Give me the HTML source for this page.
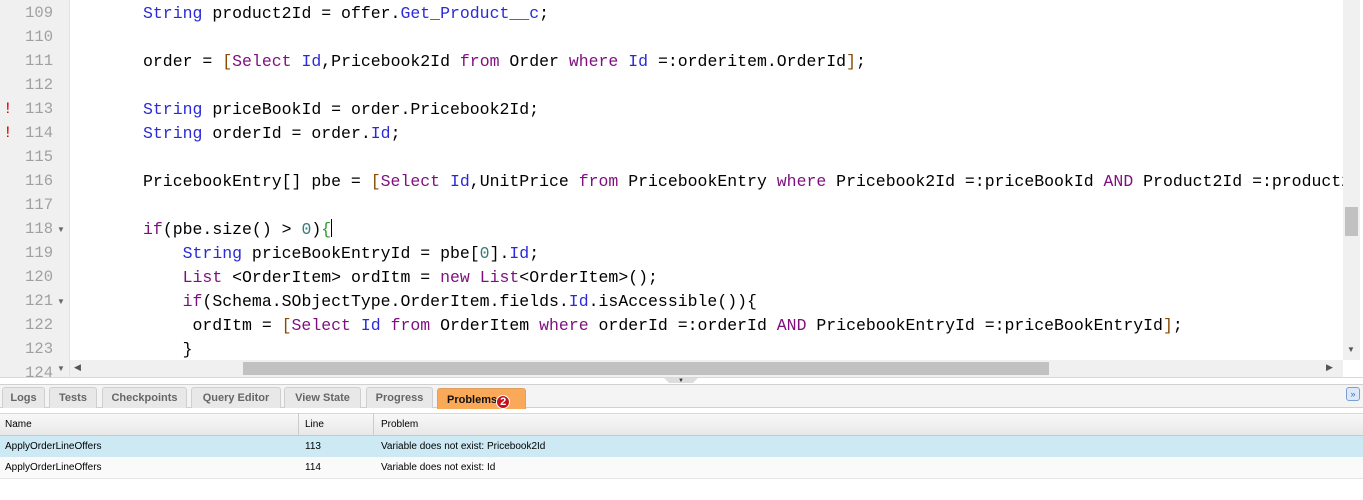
<!DOCTYPE html>
<html><head><meta charset="utf-8"><style>
*{margin:0;padding:0;box-sizing:border-box}
body{width:1363px;height:500px;overflow:hidden;background:#fff;position:relative;font-family:"Liberation Sans",sans-serif}
#gut{position:absolute;left:0;top:0;width:70px;height:377px;background:#f0f0f0;border-right:1px solid #e3e3e3}
.ln{position:absolute;left:0;width:53px;text-align:right;font:15.5px "Liberation Mono",monospace;color:#a0a0a0;height:24px;line-height:25px}
.ex{position:absolute;left:3px;color:#e00000;font:16px "Liberation Mono",monospace;line-height:25px}
.fd{position:absolute;left:57px;font-size:8px;color:#666;line-height:25px}
.cl{position:absolute;left:143px;font:16.5px "Liberation Mono",monospace;white-space:pre;height:24px;line-height:25px;color:#000}
.k{color:#2a2ad8}.p{color:#7f0f7f}.n{color:#3a7a7a}.b{color:#8a4a00}.g{color:#2a9a2a}
#vs{position:absolute;left:1343px;top:0;width:17px;height:360px;background:#f0f0f0}
#hs{position:absolute;left:70px;top:360px;width:1273px;height:17px;background:#f0f0f0}
.tab{position:absolute;top:387px;height:21px;background:#e8e8e8;border:1px solid #cfcfcf;border-bottom:none;border-radius:3px 3px 0 0;font:bold 11px "Liberation Sans",sans-serif;color:#666;text-align:center;line-height:20px}
.th{position:absolute;font-size:10px;color:#000}
</style></head><body>
<div id="gut"></div>
<div class="ln" style="top:1px">109</div>
<div class="ln" style="top:25px">110</div>
<div class="ln" style="top:49px">111</div>
<div class="ln" style="top:73px">112</div>
<div class="ln" style="top:97px">113</div><div class="ex" style="top:97px">!</div>
<div class="ln" style="top:121px">114</div><div class="ex" style="top:121px">!</div>
<div class="ln" style="top:145px">115</div>
<div class="ln" style="top:169px">116</div>
<div class="ln" style="top:193px">117</div>
<div class="ln" style="top:217px">118</div><div class="fd" style="top:217px">▼</div>
<div class="ln" style="top:241px">119</div>
<div class="ln" style="top:265px">120</div>
<div class="ln" style="top:289px">121</div><div class="fd" style="top:289px">▼</div>
<div class="ln" style="top:313px">122</div>
<div class="ln" style="top:337px">123</div>
<div class="ln" style="top:361px;height:16px;overflow:hidden">124</div><div class="fd" style="top:361px;line-height:16px">▼</div>

<div class="cl" style="top:1px"><span class="k">String</span> product2Id = offer.<span class="k">Get_Product__c</span>;</div>
<div class="cl" style="top:49px">order = <span class="b">[</span><span class="p">Select</span> <span class="k">Id</span>,Pricebook2Id <span class="p">from</span> Order <span class="p">where</span> <span class="k">Id</span> =:orderitem.OrderId<span class="b">]</span>;</div>
<div class="cl" style="top:97px"><span class="k">String</span> priceBookId = order.Pricebook2Id;</div>
<div class="cl" style="top:121px"><span class="k">String</span> orderId = order.<span class="k">Id</span>;</div>
<div class="cl" style="top:169px;width:1200px;overflow:hidden">PricebookEntry[] pbe = <span class="b">[</span><span class="p">Select</span> <span class="k">Id</span>,UnitPrice <span class="p">from</span> PricebookEntry <span class="p">where</span> Pricebook2Id =:priceBookId <span class="p">AND</span> Product2Id =:product2Id];</div>
<div class="cl" style="top:217px"><span class="p">if</span>(pbe.size() &gt; <span class="n">0</span>)<span class="g">{</span><span style="display:inline-block;width:1px;height:18px;background:#000;vertical-align:-3px"></span></div>
<div class="cl" style="top:241px">    <span class="k">String</span> priceBookEntryId = pbe[<span class="n">0</span>].<span class="k">Id</span>;</div>
<div class="cl" style="top:265px">    <span class="p">List</span> &lt;OrderItem&gt; ordItm = <span class="p">new</span> <span class="p">List</span>&lt;OrderItem&gt;();</div>
<div class="cl" style="top:289px">    <span class="p">if</span>(Schema.SObjectType.OrderItem.fields.<span class="k">Id</span>.isAccessible()){</div>
<div class="cl" style="top:313px">     ordItm = <span class="b">[</span><span class="p">Select</span> <span class="k">Id</span> <span class="p">from</span> OrderItem <span class="p">where</span> orderId =:orderId <span class="p">AND</span> PricebookEntryId =:priceBookEntryId<span class="b">]</span>;</div>
<div class="cl" style="top:337px">    }</div>

<div id="vs"><div style="position:absolute;left:2px;top:207px;width:13px;height:29px;background:#c1c1c1"></div><div style="position:absolute;left:4px;top:345px;font-size:8px;color:#555">▼</div></div>
<div id="hs"><div style="position:absolute;left:173px;top:2px;width:806px;height:13px;background:#c1c1c1"></div><div style="position:absolute;left:4px;top:2px;font-size:9px;color:#555">◀</div><div style="position:absolute;left:1256px;top:2px;font-size:9px;color:#555">▶</div></div>
<div style="position:absolute;left:0;top:377px;width:1363px;height:8px;background:#fff;border-top:1px solid #d8d8d8"></div>
<div style="position:absolute;left:664px;top:378px;width:34px;height:5px;background:#ddd;clip-path:polygon(0 0,100% 0,85% 100%,15% 100%)"></div>
<div style="position:absolute;left:678px;top:378px;font-size:6px;color:#333">▼</div>
<div style="position:absolute;left:0;top:384px;width:1363px;height:24px;background:#f4f4f4;border-top:1px solid #d0d0d0;border-bottom:1px solid #d0d0d0"></div>
<div style="position:absolute;left:1346px;top:387px;width:14px;height:14px;border:1px solid #7aa0d0;border-radius:3px;background:#dde9f8;color:#3a70c0;font-size:9px;text-align:center;line-height:12px">»</div>
<div class="tab" style="left:2px;width:43px">Logs</div>
<div class="tab" style="left:49px;width:48px">Tests</div>
<div class="tab" style="left:102px;width:85px">Checkpoints</div>
<div class="tab" style="left:191px;width:90px">Query Editor</div>
<div class="tab" style="left:284px;width:77px">View State</div>
<div class="tab" style="left:366px;width:67px">Progress</div>
<div class="tab" style="left:437px;width:89px;background:#f9a957;color:#111;top:388px;border-color:#e0a060;text-align:left;padding-left:9px;line-height:23px">Problems<span style="display:inline-block;width:14px;height:14px;border-radius:50%;background:#c8101a;color:#fff;border:1px solid #fff;text-align:center;line-height:12px;font-size:11px;margin-left:-1px;vertical-align:-2px">2</span></div>
<div style="position:absolute;left:0;top:413px;width:1363px;height:23px;background:linear-gradient(#f8f8f8,#e8e8e8);border-top:1px solid #d8d8d8;border-bottom:1px solid #c8c8c8"></div>
<div style="position:absolute;left:298px;top:413px;width:1px;height:23px;background:#ccc"></div>
<div style="position:absolute;left:373px;top:413px;width:1px;height:23px;background:#ccc"></div>
<div class="th" style="left:5px;top:419px">Name</div><div class="th" style="left:305px;top:419px">Line</div><div class="th" style="left:381px;top:419px">Problem</div>
<div style="position:absolute;left:0;top:436px;width:1363px;height:21px;background:#cce9f4"></div>
<div style="position:absolute;left:0;top:457px;width:1363px;height:22px;background:#fafafa;border-bottom:1px solid #e6e6e6"></div>
<div class="th" style="left:5px;top:441px">ApplyOrderLineOffers</div><div class="th" style="left:305px;top:441px">113</div><div class="th" style="left:381px;top:441px">Variable does not exist: Pricebook2Id</div>
<div class="th" style="left:5px;top:462px">ApplyOrderLineOffers</div><div class="th" style="left:305px;top:462px">114</div><div class="th" style="left:381px;top:462px">Variable does not exist: Id</div>
</body></html>
